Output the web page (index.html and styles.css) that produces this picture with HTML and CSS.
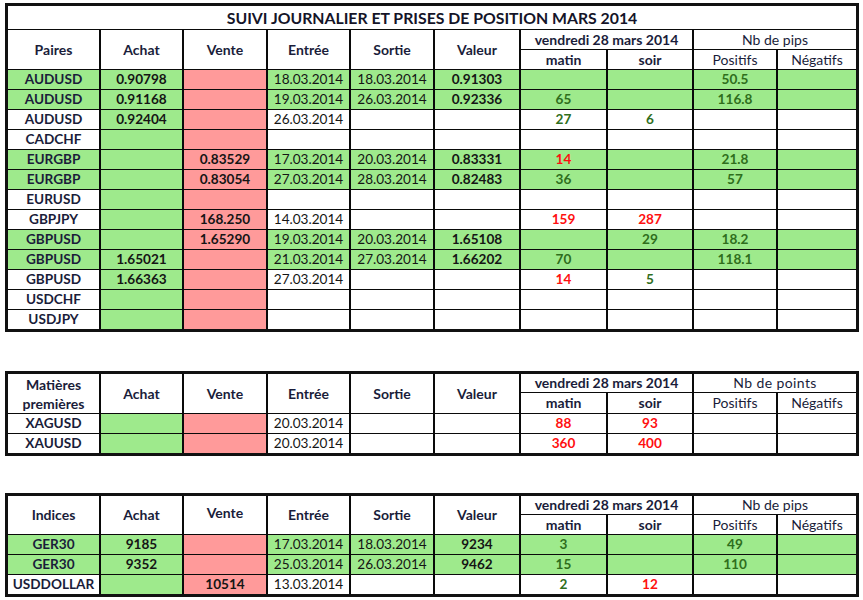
FILE: index.html
```html
<!DOCTYPE html>
<html lang="fr">
<head>
<meta charset="utf-8">
<title>Suivi journalier mars 2014</title>
<link rel="stylesheet" href="styles.css">
</head>
<body>
<div class="sheet t1">
  <div class="c title all">SUIVI JOURNALIER ET PRISES DE POSITION MARS 2014</div>
  <div class="c h r2">Paires</div>
  <div class="c h r2">Achat</div>
  <div class="c h r2">Vente</div>
  <div class="c h r2">Entrée</div>
  <div class="c h r2">Sortie</div>
  <div class="c h r2">Valeur</div>
  <div class="c h s2">vendredi 28 mars 2014</div>
  <div class="c hn s2">Nb de pips</div>
  <div class="c h hb">matin</div>
  <div class="c h hb">soir</div>
  <div class="c hn hb">Positifs</div>
  <div class="c hn hb">Négatifs</div>

  <div class="c g pr">AUDUSD</div><div class="c g v">0.90798</div><div class="c p"></div><div class="c g d">18.03.2014</div><div class="c g d">18.03.2014</div><div class="c g v">0.91303</div><div class="c g"></div><div class="c g"></div><div class="c g gn">50.5</div><div class="c g"></div>
  <div class="c g pr">AUDUSD</div><div class="c g v">0.91168</div><div class="c p"></div><div class="c g d">19.03.2014</div><div class="c g d">26.03.2014</div><div class="c g v">0.92336</div><div class="c g gn">65</div><div class="c g"></div><div class="c g gn">116.8</div><div class="c g"></div>
  <div class="c pr">AUDUSD</div><div class="c g v">0.92404</div><div class="c p"></div><div class="c d">26.03.2014</div><div class="c"></div><div class="c"></div><div class="c gn">27</div><div class="c gn">6</div><div class="c"></div><div class="c"></div>
  <div class="c pr">CADCHF</div><div class="c g"></div><div class="c p"></div><div class="c"></div><div class="c"></div><div class="c"></div><div class="c"></div><div class="c"></div><div class="c"></div><div class="c"></div>
  <div class="c g pr">EURGBP</div><div class="c g"></div><div class="c p v">0.83529</div><div class="c g d">17.03.2014</div><div class="c g d">20.03.2014</div><div class="c g v">0.83331</div><div class="c g rd">14</div><div class="c g"></div><div class="c g gn">21.8</div><div class="c g"></div>
  <div class="c g pr">EURGBP</div><div class="c g"></div><div class="c p v">0.83054</div><div class="c g d">27.03.2014</div><div class="c g d">28.03.2014</div><div class="c g v">0.82483</div><div class="c g gn">36</div><div class="c g"></div><div class="c g gn">57</div><div class="c g"></div>
  <div class="c pr">EURUSD</div><div class="c g"></div><div class="c p"></div><div class="c"></div><div class="c"></div><div class="c"></div><div class="c"></div><div class="c"></div><div class="c"></div><div class="c"></div>
  <div class="c pr">GBPJPY</div><div class="c g"></div><div class="c p v">168.250</div><div class="c d">14.03.2014</div><div class="c"></div><div class="c"></div><div class="c rd">159</div><div class="c rd">287</div><div class="c"></div><div class="c"></div>
  <div class="c g pr">GBPUSD</div><div class="c g"></div><div class="c p v">1.65290</div><div class="c g d">19.03.2014</div><div class="c g d">20.03.2014</div><div class="c g v">1.65108</div><div class="c g"></div><div class="c g gn">29</div><div class="c g gn">18.2</div><div class="c g"></div>
  <div class="c g pr">GBPUSD</div><div class="c g v">1.65021</div><div class="c p"></div><div class="c g d">21.03.2014</div><div class="c g d">27.03.2014</div><div class="c g v">1.66202</div><div class="c g gn">70</div><div class="c g"></div><div class="c g gn">118.1</div><div class="c g"></div>
  <div class="c pr">GBPUSD</div><div class="c g v">1.66363</div><div class="c p"></div><div class="c d">27.03.2014</div><div class="c"></div><div class="c"></div><div class="c rd">14</div><div class="c gn">5</div><div class="c"></div><div class="c"></div>
  <div class="c pr">USDCHF</div><div class="c g"></div><div class="c p"></div><div class="c"></div><div class="c"></div><div class="c"></div><div class="c"></div><div class="c"></div><div class="c"></div><div class="c"></div>
  <div class="c pr">USDJPY</div><div class="c g"></div><div class="c p"></div><div class="c"></div><div class="c"></div><div class="c"></div><div class="c"></div><div class="c"></div><div class="c"></div><div class="c"></div>
</div>

<div class="sheet t2">
  <div class="c h r2 two">Matières<br>premières</div>
  <div class="c h r2">Achat</div>
  <div class="c h r2">Vente</div>
  <div class="c h r2">Entrée</div>
  <div class="c h r2">Sortie</div>
  <div class="c h r2">Valeur</div>
  <div class="c h s2">vendredi 28 mars 2014</div>
  <div class="c hn s2 sp">Nb de points</div>
  <div class="c h hb">matin</div>
  <div class="c h hb">soir</div>
  <div class="c hn hb">Positifs</div>
  <div class="c hn hb">Négatifs</div>

  <div class="c pr">XAGUSD</div><div class="c g"></div><div class="c p"></div><div class="c d">20.03.2014</div><div class="c"></div><div class="c"></div><div class="c rd">88</div><div class="c rd">93</div><div class="c"></div><div class="c"></div>
  <div class="c pr">XAUUSD</div><div class="c g"></div><div class="c p"></div><div class="c d">20.03.2014</div><div class="c"></div><div class="c"></div><div class="c rd">360</div><div class="c rd">400</div><div class="c"></div><div class="c"></div>
</div>

<div class="sheet t3">
  <div class="c h r2">Indices</div>
  <div class="c h r2">Achat</div>
  <div class="c h r2 up">Vente</div>
  <div class="c h r2">Entrée</div>
  <div class="c h r2">Sortie</div>
  <div class="c h r2">Valeur</div>
  <div class="c h s2">vendredi 28 mars 2014</div>
  <div class="c hn s2">Nb de pips</div>
  <div class="c h hb">matin</div>
  <div class="c h hb">soir</div>
  <div class="c hn hb">Positifs</div>
  <div class="c hn hb">Négatifs</div>

  <div class="c g pr">GER30</div><div class="c g v">9185</div><div class="c p"></div><div class="c g d">17.03.2014</div><div class="c g d">18.03.2014</div><div class="c g v">9234</div><div class="c g gn">3</div><div class="c g"></div><div class="c g gn">49</div><div class="c g"></div>
  <div class="c g pr">GER30</div><div class="c g v">9352</div><div class="c p"></div><div class="c g d">25.03.2014</div><div class="c g d">26.03.2014</div><div class="c g v">9462</div><div class="c g gn">15</div><div class="c g"></div><div class="c g gn">110</div><div class="c g"></div>
  <div class="c pr">USDDOLLAR</div><div class="c g"></div><div class="c p v">10514</div><div class="c d">13.03.2014</div><div class="c"></div><div class="c"></div><div class="c gn">2</div><div class="c rd">12</div><div class="c"></div><div class="c"></div>
</div>
</body>
</html>
```

FILE: styles.css
```css
body {
  margin: 0;
  padding: 3px 0 0 5px;
  background: #ffffff;
  font-family: Lato, "Open Sans", "Liberation Sans", sans-serif;
}

.sheet {
  display: grid;
  grid-template-columns: 91px 81px 82px 81px 82px 84px 85px 84px 82px 78px;
  column-gap: 2px;
  row-gap: 1px;
  background: #0a0a0a;
  border: 3px solid #111111;
  width: max-content;
}

.t1 {
  grid-template-rows: 23px 19px 19px;
  grid-auto-rows: 19px;
}

.t2 {
  grid-template-rows: 18px 20px;
  grid-auto-rows: 19px;
  margin-top: 39px;
}

.t3 {
  grid-template-rows: 18px 19px;
  grid-auto-rows: 19px;
  margin-top: 37px;
}

.c {
  background: #ffffff;
  display: flex;
  align-items: center;
  justify-content: center;
  font-size: 13.6px;
  line-height: 1;
  color: #111111;
  white-space: nowrap;
  overflow: hidden;
}

.all { grid-column: 1 / -1; }
.r2 { grid-row: span 2; }
.s2 { grid-column: span 2; }

.title {
  font-size: 15.8px;
  font-weight: 700;
  color: #141428;
}

.h {
  font-size: 14px;
  font-weight: 700;
  color: #1a1d3a;
}

.hn {
  font-size: 14px;
  font-weight: 400;
  color: #1a1d3a;
}

.two {
  line-height: 19px;
  text-align: center;
}

.sp { letter-spacing: 0.4px; }

.up { padding-bottom: 4px; }

.g { background: #9eea8c; }
.p { background: #ff9a9a; }

.pr {
  font-weight: 700;
  color: #1a1d3a;
}

.v { font-weight: 700; color: #151515; }
.d { font-weight: 400; color: #151515; }
.gn { font-weight: 700; color: #2f6e1c; }
.rd { font-weight: 700; color: #ff1010; }
```
